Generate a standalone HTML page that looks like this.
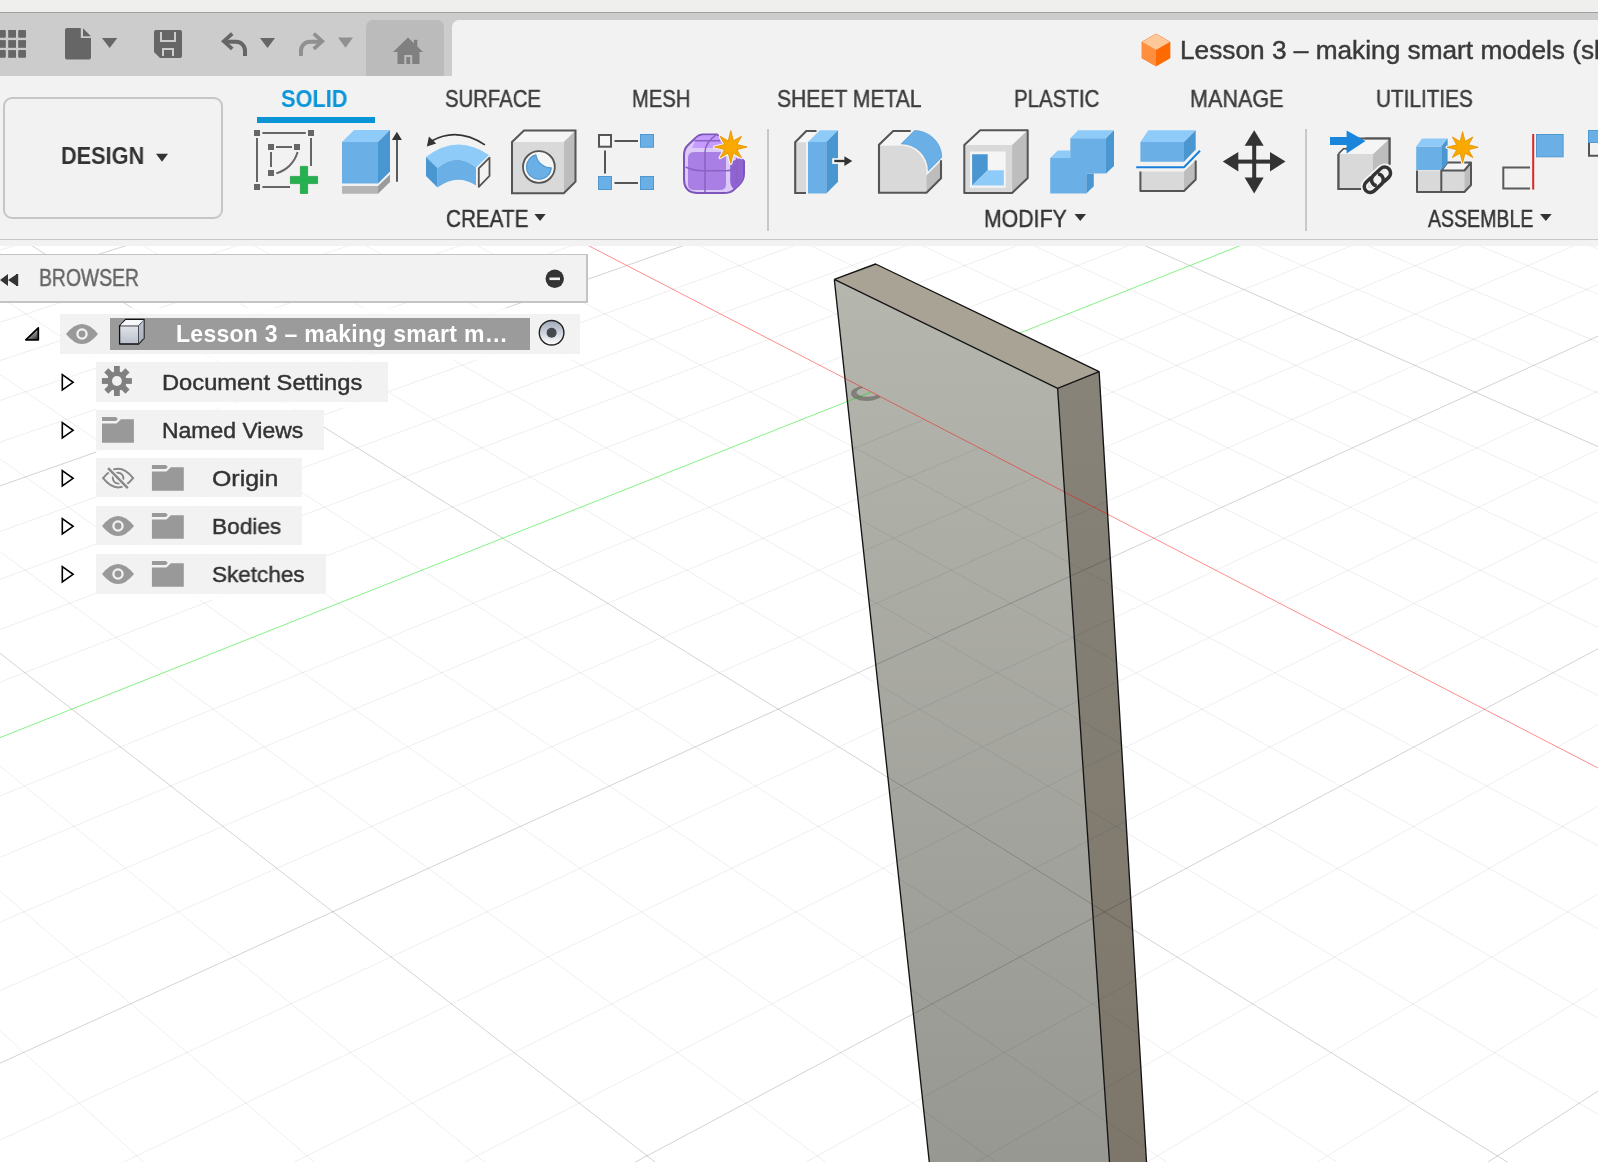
<!DOCTYPE html>
<html><head><meta charset="utf-8">
<style>
html,body{margin:0;padding:0;}
body{width:1598px;height:1162px;position:relative;overflow:hidden;background:#fff;font-family:"Liberation Sans",sans-serif;}
.a{position:absolute;}
.t{position:absolute;white-space:nowrap;line-height:1;will-change:transform;-webkit-text-stroke:0.45px currentColor;}
svg{position:absolute;left:0;top:0;overflow:visible;}
</style></head><body>
<!-- viewport -->
<svg class="a" width="1598" height="1162" viewBox="0 0 1598 1162" style="left:0;top:0">
<defs>
<linearGradient id="gf" x1="0" y1="280" x2="0" y2="1162" gradientUnits="userSpaceOnUse"><stop offset="0" stop-color="#b5b6ae"/><stop offset="1" stop-color="#989892"/></linearGradient>
<linearGradient id="gr" x1="0" y1="372" x2="0" y2="1162" gradientUnits="userSpaceOnUse"><stop offset="0" stop-color="#878378"/><stop offset="1" stop-color="#7d766b"/></linearGradient>
<clipPath id="cfull"><polygon points="834.3,279.4 1057.6,388.3 1109.5,1162 929.3,1162"/><polygon points="1057.6,388.3 1099.1,371.6 1146.5,1162 1109.5,1162"/></clipPath>
<clipPath id="cf"><polygon points="845,378.4 1064.6,492.1 1109.5,1162 929.3,1162"/><polygon points="1064.6,492.1 1105.2,474.4 1146.5,1162 1109.5,1162"/></clipPath>
</defs>
<g fill="none" stroke-width="1">
<path d="M-1470.9 506.8L953.4 -175.2M-1430.4 569.9L1029.7 -148.3M-1409.1 603.0L1069.1 -134.4M-1387.2 637.1L1109.2 -120.2M-1364.5 672.4L1150.3 -105.8M-1316.8 746.7L1235.0 -75.9M-1291.7 785.7L1278.7 -60.4M-1265.7 826.2L1323.5 -44.7M-1238.7 868.1L1369.2 -28.5M-1181.7 956.7L1463.8 4.8M-1151.6 1003.6L1512.8 22.1M-1120.3 1052.3L1562.9 39.8M-1087.8 1102.9L1614.2 57.9M-1018.6 1210.6L1720.6 95.4M-981.8 1267.8L1775.7 114.9M-943.4 1327.5L1832.2 134.8M-903.3 1389.9L1890.2 155.2M-817.5 1523.4L2010.6 197.7M-771.6 1594.9L2073.2 219.8M-723.4 1669.9L2137.5 242.5M-672.8 1748.6L2203.5 265.7M-563.6 1918.5L2340.9 314.2M-504.5 2010.3L2412.6 339.5M-442.2 2107.2L2486.3 365.5M-376.4 2209.7L2562.1 392.3M-232.7 2433.2L2720.5 448.1M-154.1 2555.4L2803.3 477.4M-70.5 2685.5L2888.7 507.5M18.7 2824.3L2976.7 538.5M216.2 3131.6L3161.3 603.6M325.9 3302.2L3258.1 637.8M-1364.0 476.7L513.8 3131.5M-1260.2 447.5L688.7 2972.6M-1159.5 419.2L851.9 2824.3M-1061.7 391.7L1004.6 2685.5M-874.4 339.0L1282.3 2433.2M-784.6 313.7L1408.9 2318.2M-697.3 289.2L1528.2 2209.7M-612.4 265.3L1641.0 2107.3M-449.2 219.4L1848.6 1918.6M-370.8 197.3L1944.5 1831.5M-294.4 175.8L2035.5 1748.7M-219.9 154.9L2122.1 1670.0M-76.5 114.5L2283.3 1523.6M-7.4 95.1L2358.3 1455.4M60.0 76.1L2430.1 1390.2M125.8 57.6L2498.7 1327.8M252.8 21.9L2627.4 1210.9M314.2 4.6L2687.8 1156.0M374.1 -12.2L2745.8 1103.4M432.7 -28.7L2801.5 1052.7M546.0 -60.6L2906.6 957.2M600.8 -76.0L2956.2 912.1M654.4 -91.1L3004.0 868.6M706.9 -105.9L3050.2 826.7M808.6 -134.5L3137.6 747.2M857.9 -148.3L3179.2 709.5M906.1 -161.9L3219.3 673.1M953.4 -175.2L3258.1 637.8" stroke="rgba(0,0,0,0.068)"/>
<path d="M-1451.0 537.9L991.2 -161.9M-1341.0 708.9L1192.2 -91.0M-1210.8 911.6L1416.0 -12.0M-861.4 1455.1L1949.6 176.2M-619.6 1831.3L2271.3 289.7M-306.6 2318.1L2640.1 419.8M114.1 2972.6L3067.5 570.6M-1470.9 506.8L325.9 3302.2M-966.7 365.0L1147.8 2555.4M-529.7 242.0L1747.6 2010.4M-147.3 134.5L2204.6 1595.1M490.0 -44.8L2855.0 1004.1M758.3 -120.3L3094.7 786.3" stroke="rgba(0,0,0,0.175)"/>
</g>
<path d="M190.1 39.5L2564.4 1268.1" stroke="rgba(255,0,0,0.45)" fill="none"/>
<path d="M-1053.9 1155.7L871.2 392.0M871.2 392.0L1666.7 76.4" stroke="rgba(0,225,0,0.48)" fill="none"/>
<polygon points="834.3,279.4 1057.6,388.3 1109.5,1162 929.3,1162" fill="url(#gf)"/>
<polygon points="834.3,279.4 875.6,264 1099.1,371.6 1057.6,388.3" fill="#a9a396"/>
<polygon points="1057.6,388.3 1099.1,371.6 1146.5,1162 1109.5,1162" fill="url(#gr)"/>
<path d="M190.1 39.5L2564.4 1268.1" stroke="rgba(255,0,0,0.45)" fill="none" clip-path="url(#cfull)"/>
<g clip-path="url(#cf)">
<g fill="none" stroke-width="1">
<path d="M-1470.9 506.8L953.4 -175.2M-1430.4 569.9L1029.7 -148.3M-1409.1 603.0L1069.1 -134.4M-1387.2 637.1L1109.2 -120.2M-1364.5 672.4L1150.3 -105.8M-1316.8 746.7L1235.0 -75.9M-1291.7 785.7L1278.7 -60.4M-1265.7 826.2L1323.5 -44.7M-1238.7 868.1L1369.2 -28.5M-1181.7 956.7L1463.8 4.8M-1151.6 1003.6L1512.8 22.1M-1120.3 1052.3L1562.9 39.8M-1087.8 1102.9L1614.2 57.9M-1018.6 1210.6L1720.6 95.4M-981.8 1267.8L1775.7 114.9M-943.4 1327.5L1832.2 134.8M-903.3 1389.9L1890.2 155.2M-817.5 1523.4L2010.6 197.7M-771.6 1594.9L2073.2 219.8M-723.4 1669.9L2137.5 242.5M-672.8 1748.6L2203.5 265.7M-563.6 1918.5L2340.9 314.2M-504.5 2010.3L2412.6 339.5M-442.2 2107.2L2486.3 365.5M-376.4 2209.7L2562.1 392.3M-232.7 2433.2L2720.5 448.1M-154.1 2555.4L2803.3 477.4M-70.5 2685.5L2888.7 507.5M18.7 2824.3L2976.7 538.5M216.2 3131.6L3161.3 603.6M325.9 3302.2L3258.1 637.8M-1364.0 476.7L513.8 3131.5M-1260.2 447.5L688.7 2972.6M-1159.5 419.2L851.9 2824.3M-1061.7 391.7L1004.6 2685.5M-874.4 339.0L1282.3 2433.2M-784.6 313.7L1408.9 2318.2M-697.3 289.2L1528.2 2209.7M-612.4 265.3L1641.0 2107.3M-449.2 219.4L1848.6 1918.6M-370.8 197.3L1944.5 1831.5M-294.4 175.8L2035.5 1748.7M-219.9 154.9L2122.1 1670.0M-76.5 114.5L2283.3 1523.6M-7.4 95.1L2358.3 1455.4M60.0 76.1L2430.1 1390.2M125.8 57.6L2498.7 1327.8M252.8 21.9L2627.4 1210.9M314.2 4.6L2687.8 1156.0M374.1 -12.2L2745.8 1103.4M432.7 -28.7L2801.5 1052.7M546.0 -60.6L2906.6 957.2M600.8 -76.0L2956.2 912.1M654.4 -91.1L3004.0 868.6M706.9 -105.9L3050.2 826.7M808.6 -134.5L3137.6 747.2M857.9 -148.3L3179.2 709.5M906.1 -161.9L3219.3 673.1M953.4 -175.2L3258.1 637.8" stroke="rgba(0,0,0,0.068)"/>
<path d="M-1451.0 537.9L991.2 -161.9M-1341.0 708.9L1192.2 -91.0M-1210.8 911.6L1416.0 -12.0M-861.4 1455.1L1949.6 176.2M-619.6 1831.3L2271.3 289.7M-306.6 2318.1L2640.1 419.8M114.1 2972.6L3067.5 570.6M-1470.9 506.8L325.9 3302.2M-966.7 365.0L1147.8 2555.4M-529.7 242.0L1747.6 2010.4M-147.3 134.5L2204.6 1595.1M490.0 -44.8L2855.0 1004.1M758.3 -120.3L3094.7 786.3" stroke="rgba(0,0,0,0.175)"/>
</g>
<path d="M-1053.9 1155.7L871.2 392.0" stroke="rgba(0,225,0,0.48)" fill="none"/>
</g>
<path d="M851 393.4A15.6 7.6 0 1 0 882.2 393.4A15.6 7.6 0 1 0 851 393.4Z M856.5 392.2A11.2 4.6 0 1 0 878.9 392.2A11.2 4.6 0 1 0 856.5 392.2Z" fill="rgba(60,60,56,0.42)" fill-rule="evenodd" clip-path="url(#cf)"/>
<path d="M834.3 279.4L875.6 264L1099.1 371.6L1146.5 1162M834.3 279.4L1057.6 388.3L1099.1 371.6M1057.6 388.3L1109.5 1162M834.3 279.4L929.3 1162" stroke="#141414" stroke-width="1.35" fill="none" stroke-linejoin="round"/>
</svg>
<!-- top chrome -->
<div class="a" style="left:0;top:0;width:1598px;height:12px;background:#efefee"></div>
<div class="a" style="left:0;top:12px;width:1598px;height:1px;background:#9f9f9f"></div>
<div class="a" style="left:0;top:13px;width:1598px;height:63px;background:#cccccc"></div>
<div class="a" style="left:366px;top:20px;width:78px;height:56px;background:#bbbbbb;border-radius:7px 7px 0 0"></div>
<div class="a" style="left:452px;top:20px;width:1146px;height:56px;background:#f2f2f2;border-radius:7px 0 0 0"></div>
<!-- toolbar -->
<div class="a" style="left:0;top:76px;width:1598px;height:163px;background:#f2f2f2"></div>
<div class="a" style="left:0;top:239px;width:1598px;height:1px;background:#c8c8c8"></div>
<div class="a" style="left:0;top:240px;width:1598px;height:6px;background:#f2f2f2"></div>


<!-- quick access icons -->
<svg class="a" width="460" height="76" viewBox="0 0 460 76" style="left:0;top:0">
 <g fill="#666">
  <rect x="-2" y="30" width="7.8" height="7.7" rx="1"/><rect x="8.2" y="30" width="7.8" height="7.7"/><rect x="18.2" y="30" width="7.8" height="7.7" rx="1"/>
  <rect x="-2" y="40.1" width="7.8" height="7.7"/><rect x="8.2" y="40.1" width="7.8" height="7.7"/><rect x="18.2" y="40.1" width="7.8" height="7.7"/>
  <rect x="-2" y="50.1" width="7.8" height="7.7" rx="1"/><rect x="8.2" y="50.1" width="7.8" height="7.7"/><rect x="18.2" y="50.1" width="7.8" height="7.7" rx="1"/>
  <path d="M67 28H80.8V38.1H91V57.6A2 2 0 0 1 89 59.6H67A2 2 0 0 1 65 57.6V30A2 2 0 0 1 67 28Z"/>
  <path d="M83 28.3L90.9 36.2H83Z"/>
  <path d="M102 38H117.3L109.65 48Z"/>
  <path d="M156 30H180A2 2 0 0 1 182 32V56A2 2 0 0 1 180 58H160L154 52V32A2 2 0 0 1 156 30Z"/>
  <path d="M221 41.3L231 32.3L233.5 35L226.5 41.3L233.5 47.6L231 50.3Z"/>
  <path d="M225 39.8H236A11 11 0 0 1 247 50.8V56H243V50.8A7 7 0 0 0 236 43.8H225Z"/>
  <path d="M260 38H275L267.5 48Z"/>
 </g>
 <g fill="#cccccc">
  <path d="M160 32H162V40H174V32H176V42H160Z"/>
  <path d="M162 56V48H174V56H172V50H164V56Z"/>
 </g>
 <g fill="#909090">
  <path d="M325 41.3L315 32.3L312.5 35L319.5 41.3L312.5 47.6L315 50.3Z"/>
  <path d="M321 39.8H310A11 11 0 0 0 299 50.8V56H303V50.8A7 7 0 0 1 310 43.8H321Z"/>
  <path d="M338 37.6H353L345.5 47.7Z"/>
 </g>
 <g fill="#808080">
  <path d="M408 37.5L423 52H419.5V64H397.5V52H393Z"/>
  <rect x="413.9" y="39.8" width="3.4" height="8"/>
  <rect x="404.3" y="55" width="7.9" height="9" fill="#bbbbbb"/>
  <rect x="406.3" y="57" width="3.9" height="7"/>
 </g>
</svg>
<!-- title -->
<svg class="a" width="40" height="40" viewBox="0 0 40 40" style="left:1136px;top:30px">
 <path d="M20 4L34 12V28L20 36L6 28V12Z" fill="#ff8a3a" stroke="#e8782e" stroke-width="0.8"/>
 <path d="M20 4L34 12L20 20L6 12Z" fill="#ffc898"/>
 <path d="M20 20L34 12V28L20 36Z" fill="#ff6a00"/>
 <path d="M20 20L6 12V28L20 36Z" fill="#ff8f3f"/>
</svg>
<div class="t" id="title" style="left:1179.97px;top:38.4px;font-size:25.8px;color:#3a3a3a;transform:scaleX(1.017);transform-origin:0 0">Lesson 3 – making smart models (slot)</div>

<!-- tabs -->
<div class="t" id="tSOLID" style="left:280.50px;top:87.7px;font-size:23.6px;color:#0a96d8;font-weight:bold;-webkit-text-stroke:0;transform:scaleX(0.9229);transform-origin:0 0">SOLID</div>
<div class="a" style="left:257px;top:117px;width:118px;height:6px;background:#0a94d6"></div>
<div class="t" id="tSURFACE" style="left:445.44px;top:87.7px;font-size:23.6px;color:#3c3c3c;transform:scaleX(0.8605);transform-origin:0 0">SURFACE</div>
<div class="t" id="tMESH" style="left:632.15px;top:87.7px;font-size:23.6px;color:#3c3c3c;transform:scaleX(0.8544);transform-origin:0 0">MESH</div>
<div class="t" id="tSHEET" style="left:777.11px;top:87.7px;font-size:23.6px;color:#3c3c3c;transform:scaleX(0.8944);transform-origin:0 0">SHEET METAL</div>
<div class="t" id="tPLASTIC" style="left:1013.63px;top:87.7px;font-size:23.6px;color:#3c3c3c;transform:scaleX(0.8685);transform-origin:0 0">PLASTIC</div>
<div class="t" id="tMANAGE" style="left:1189.79px;top:87.7px;font-size:23.6px;color:#3c3c3c;transform:scaleX(0.9143);transform-origin:0 0">MANAGE</div>
<div class="t" id="tUTIL" style="left:1375.92px;top:87.7px;font-size:23.6px;color:#3c3c3c;transform:scaleX(0.8783);transform-origin:0 0">UTILITIES</div>

<!-- design button -->
<div class="a" style="left:3.2px;top:97px;width:215.5px;height:117.7px;border:2px solid #c6c6c6;border-radius:9px"></div>
<div class="t" id="tDESIGN" style="left:61.40px;top:143.7px;font-size:24px;color:#333;font-weight:bold;-webkit-text-stroke:0;transform:scaleX(0.9043);transform-origin:0 0">DESIGN</div>
<svg class="a" width="20" height="20" style="left:150px;top:150px" viewBox="0 0 20 20"><path d="M6 3.8H18L12 11.8Z" fill="#333"/></svg>

<!-- panel labels -->
<div class="t" id="tCREATE" style="left:446.13px;top:206.8px;font-size:23.8px;color:#333;transform:scaleX(0.8688);transform-origin:0 0">CREATE</div>
<svg class="a" width="20" height="20" style="left:530px;top:210px" viewBox="0 0 20 20"><path d="M4.4 4H15.7L10.05 11Z" fill="#333"/></svg>
<div class="t" id="tMODIFY" style="left:983.61px;top:207px;font-size:23.8px;color:#333;transform:scaleX(0.8935);transform-origin:0 0">MODIFY</div>
<svg class="a" width="20" height="20" style="left:1070px;top:210px" viewBox="0 0 20 20"><path d="M4.5 4H16L10.25 11Z" fill="#333"/></svg>
<div class="t" id="tASSEMBLE" style="left:1427.80px;top:207px;font-size:23.8px;color:#333;transform:scaleX(0.8209);transform-origin:0 0">ASSEMBLE</div>
<svg class="a" width="20" height="20" style="left:1536px;top:210px" viewBox="0 0 20 20"><path d="M4 4H15.7L9.85 11Z" fill="#333"/></svg>
<div class="a" style="left:767px;top:129px;width:2px;height:102px;background:#c8c8c8"></div>
<div class="a" style="left:1305px;top:129px;width:2px;height:102px;background:#c8c8c8"></div>


<svg class="a" width="1598" height="240" viewBox="0 0 1598 240" style="left:0;top:0">
<defs>
 <g id="star8"><path d="M0.00 -16.30L2.53 -6.10L10.68 -10.68L6.10 -2.53L16.30 0.00L6.10 2.53L10.68 10.68L2.53 6.10L0.00 16.30L-2.53 6.10L-10.68 10.68L-6.10 2.53L-16.30 0.00L-6.10 -2.53L-10.68 -10.68L-2.53 -6.10Z"/></g>
</defs>
<!-- 1 sketch -->
<g fill="#666">
 <rect x="254" y="130" width="6" height="6"/><rect x="308" y="130" width="6" height="6"/><rect x="254" y="184" width="6" height="6"/>
 <rect x="268" y="144" width="6" height="6"/><rect x="294" y="144" width="6" height="6"/><rect x="268" y="170" width="6" height="6"/>
</g>
<g stroke="#666" stroke-width="2" fill="none">
 <path d="M262.4 133H305.8M257 138V182M311 138V166M262.4 187H290M276 147H292M271 152V167M276.3 173.4A31 31 0 0 0 297.6 152.1"/>
</g>
<path d="M300 166H308V176H318V184H308V193.8H300V184H290V176H300Z" fill="#f2f2f2" stroke="#f2f2f2" stroke-width="2"/><path d="M300.4 166.4H307.6V176.4H317.6V183.6H307.6V193.4H300.4V183.6H290.4V176.4H300.4Z" fill="#27b04f" stroke="#21a045" stroke-width="0.8"/>
<!-- 2 extrude -->
<path d="M342 186H378V193.8H342Z" fill="#b5b5b5"/><path d="M378 186L390 174.5V182L378 193.8Z" fill="#9b9b9b"/>
<path d="M342 142H378V183.6H342Z" fill="#6aafe6"/>
<path d="M342 142L354 130H390L378 142Z" fill="#8ecbf8"/>
<path d="M378 142L390 130V171.5L378 183.6Z" fill="#4a96d0"/>
<path d="M396.2 138H397.8V181.7H396.2Z" fill="#333"/><path d="M391.9 140L396.9 131.8L401.9 140Z" fill="#333"/>
<!-- 3 revolve -->
<path d="M484.9 144.8Q457.3 126.5 431.5 141" stroke="#333" stroke-width="1.6" fill="none"/>
<path d="M426.9 146.5L428.9 136.6L436.2 143.6Z" fill="#333"/>
<path d="M426 157Q457 133 489 155L476 167.5Q457 152 437.5 168Z" fill="#8ecbf8"/>
<path d="M437.5 168Q457 152 476 167.5V185.6Q457 173 437.5 187.6Z" fill="#6aafe6"/>
<path d="M426 157L437.5 168V187.6L426 176Z" fill="#4a96d0"/>
<path d="M478.8 168.3L489.5 157.7V175.8L478.8 186.8Z" fill="#f2f2f2" stroke="#555" stroke-width="1.8" stroke-linejoin="round"/>
<!-- 4 hole -->
<path d="M512 142L524 130.5H575.5L563.8 142Z" fill="#f5f5f5"/>
<path d="M512 142H563.8V193.3H512Z" fill="#d9d9d9"/>
<path d="M563.8 142L575.5 130.5V181.6L563.8 193.3Z" fill="#bdbdbd"/>
<path d="M512 142L524 130.5H575.5V181.6L563.8 193.3H512Z" fill="none" stroke="#555" stroke-width="2" stroke-linejoin="miter"/>
<circle cx="538.9" cy="167" r="15.9" fill="#f5f5f5" stroke="#555" stroke-width="1.8"/>
<path d="M535.9 154.9A12.4 12.4 0 1 0 551.3 167.9A15.4 15.4 0 0 1 535.9 154.9Z" fill="#6aafe6" stroke="#4f98d0" stroke-width="1.1" stroke-linejoin="round"/>
<!-- 5 pattern -->
<rect x="599" y="135" width="12" height="11.7" fill="#f8f8f8" stroke="#555" stroke-width="2"/>
<rect x="640.5" y="134.5" width="13" height="12.7" fill="#6aafe6" stroke="#4f98d0" stroke-width="1"/>
<rect x="598.5" y="176.5" width="13" height="13" fill="#6aafe6" stroke="#4f98d0" stroke-width="1"/>
<rect x="640.5" y="176.5" width="13" height="13" fill="#6aafe6" stroke="#4f98d0" stroke-width="1"/>
<path d="M614.5 141H638M605 150.5V173.5M614.5 183H638" stroke="#555" stroke-width="2"/>
<!-- 6 form -->
<path d="M703 134.4H717L744 161.2V174Q744 180 739 185L733 190.5Q730 193 724 193H698Q684 193 684 179V155Q684 149 688 145L696 137.5Q699 134.4 703 134.4Z" fill="#ddc9f7" stroke="#7d54bb" stroke-width="2"/>
<path d="M697 137.5Q699.5 135.4 703 135.4H717L731 149.5Q729 148 724 148H692Z" fill="#c59bff"/>
<path d="M688 158Q688 152 694 152H720Q726 152 726 158V184Q726 190 720 190H694Q688 190 688 184Z" fill="#a97fe6"/>
<path d="M730.2 162L743 157V176Q743 181 739 185L734 189Q730.2 186 730.2 181Z" fill="#9063d4"/>
<path d="M694.4 140.8H720.2M716.3 134.7Q705 143 705 152V192M685.6 167Q694 171 704 170.8H726.6Q733 170.5 736.3 165Q740 162 743.4 160.8M736.6 158V184" stroke="#8a62c2" stroke-width="1.5" fill="none"/>
<g transform="translate(730.8 147)"><use href="#star8" fill="#f2f2f2" stroke="#f2f2f2" stroke-width="3.2" stroke-linejoin="round"/><use href="#star8" fill="#f9a900" stroke="#e49300" stroke-width="0.9"/></g>
<!-- 7 press pull -->
<path d="M795.5 142.3L806.3 131.5H816.5L806 142.3Z" fill="#f5f5f5"/>
<rect x="795.5" y="142.3" width="10.5" height="50.6" fill="#d9d9d9"/>
<path d="M806 193H795.2V142.3L806.3 131H816.5" fill="none" stroke="#555" stroke-width="2.1"/>
<path d="M808 142.1H826.3V193.6H808Z" fill="#6aafe6"/>
<path d="M808 142.1L820 130.2H838L826.3 142.1Z" fill="#8ecbf8"/>
<path d="M826.3 142.1L838 130.2V181.8L826.3 193.6Z" fill="#4a96d0"/>
<rect x="832.2" y="158.2" width="6" height="5.8" fill="#f5f5f5"/>
<path d="M834.3 161H846" stroke="#333" stroke-width="2.3"/>
<path d="M844.4 156.2L852.3 161L844.4 165.9Z" fill="#333"/>
<!-- 8 fillet -->
<path d="M880 145L893.5 131.8H912L899 145Z" fill="#f5f5f5"/>
<path d="M880 145.8H901.6A25 25.5 0 0 1 926.4 171.5V192H880Z" fill="#d9d9d9"/>
<path d="M926.4 175.4L940.2 161.8V178L926.4 191.8Z" fill="#bdbdbd"/>
<path d="M901.3 143.8L914.5 130.6A27.2 26.8 0 0 1 941.7 157.3L928.4 170.8A27 27 0 0 0 901.3 143.8Z" fill="#6aafe6" stroke="#5aa0d8" stroke-width="0.8"/>
<path d="M910.7 131H893.2L879 144.7V192.8H926.5L941 178.3V160.2" fill="none" stroke="#555" stroke-width="2.1" stroke-linejoin="miter"/>
<!-- 9 shell -->
<path d="M964.3 145.1L980.2 130.2H1027.7L1012.1 145.1Z" fill="#f5f5f5"/>
<path d="M964.3 145.1H1012.1V193H964.3Z" fill="#d9d9d9"/>
<path d="M1012.1 145.1L1027.7 130.2V178L1012.1 193Z" fill="#bdbdbd"/>
<path d="M964.3 145.1L980.2 130.2H1027.7V178L1012.1 193H964.3Z" fill="none" stroke="#555" stroke-width="2" stroke-linejoin="round"/>
<rect x="970" y="151.5" width="35.7" height="36.2" fill="#f5f5f5"/>
<path d="M972.1 154.3H987.7V170.2L972.1 185.5Z" fill="#4a96d0"/>
<path d="M972.1 185.5L987.7 170.2H1003.8V185.5Z" fill="#8ecbf8"/>
<!-- 10 combine -->
<path d="M1050.2 158L1057.8 150.5H1070.3V158Z" fill="#8ecbf8"/>
<path d="M1050.2 158H1086.3V193.6H1050.2Z" fill="#6aafe6"/>
<path d="M1086.3 173.4H1093.8V186.2L1086.3 193.6Z" fill="#4a96d0"/>
<path d="M1070.3 138.3L1078.2 130.3H1114L1106 138.3Z" fill="#8ecbf8"/>
<path d="M1070.3 138.3H1106V173.4H1070.3Z" fill="#6aafe6"/>
<path d="M1106 138.3L1114 130.3V166L1106 173.4Z" fill="#4a96d0"/>
<!-- 11 split -->
<path d="M1140.4 171.5H1184V191H1140.4Z" fill="#d9d9d9"/>
<path d="M1184 171.5L1195.7 160.5V179.5L1184 191Z" fill="#bdbdbd"/>
<path d="M1140.4 171.5V191H1184L1195.7 179.5V160.5" fill="none" stroke="#555" stroke-width="2" stroke-linejoin="round"/>
<path d="M1136.2 167.2H1184L1200 150.8" stroke="#f5f5f5" stroke-width="4" fill="none"/>
<path d="M1136.2 167.2H1184L1200 150.8" stroke="#1a80dc" stroke-width="2" fill="none"/>
<path d="M1140.4 142L1148.3 130.2H1195.7L1184 142Z" fill="#8ecbf8"/>
<path d="M1140.4 142H1184V161.7H1140.4Z" fill="#6aafe6"/>
<path d="M1184 142L1195.7 130.2V149.5L1184 161.7Z" fill="#4a96d0"/>
<!-- 12 move -->
<g fill="#333">
 <rect x="1252.2" y="140" width="4" height="43"/><rect x="1233" y="159.6" width="42" height="4"/>
 <path d="M1254.2 130.2L1263.7 145.8H1244.6Z"/><path d="M1254.2 193.5L1263.7 177.5H1244.6Z"/>
 <path d="M1222.8 161.6L1238.3 152V171.5Z"/><path d="M1285.5 161.6L1270 152V171.5Z"/>
</g>
<!-- 13 joint -->
<path d="M1338.5 154L1343.5 149H1348M1365 138.5H1389.5V164.5L1376 176M1360 189H1338.5V154" fill="none" stroke="#555" stroke-width="2"/>
<path d="M1339.5 154H1373V188H1339.5Z" fill="#d9d9d9"/>
<path d="M1339.5 154L1344 149.5H1380L1373 154Z" fill="#f5f5f5"/>
<path d="M1373 154L1388.5 139.5V163L1373 178Z" fill="#bdbdbd"/>
<path d="M1346 149.5L1357 139.5H1388.5L1373 154Z" fill="#f5f5f5"/>
<path d="M1338.5 154V189H1362M1346 149.5L1357 138.5H1389.5V164" fill="none" stroke="#555" stroke-width="2"/>
<path d="M1330 137H1346.6V130.4L1365.5 140.9L1346.6 153.4V145H1330Z" fill="#1a85dd"/>
<g transform="translate(1377.4 179.8) rotate(-43) scale(1.1)" fill="none" stroke-width="3.2">
 <path d="M-2.5 -5.4H-9A5.4 5.4 0 0 0 -9 5.4H0A5.4 5.4 0 0 0 4.1 -3.5M2.5 5.4H9A5.4 5.4 0 0 0 9 -5.4H0A5.4 5.4 0 0 0 -4.1 3.5" stroke="#f2f2f2" stroke-width="6.5"/>
 <path d="M-2.5 -5.4H-9A5.4 5.4 0 0 0 -9 5.4H0A5.4 5.4 0 0 0 4.1 -3.5" stroke="#333"/>
 <path d="M2.5 5.4H9A5.4 5.4 0 0 0 9 -5.4H0A5.4 5.4 0 0 0 -4.1 3.5" stroke="#f2f2f2" stroke-width="5.5" stroke-dasharray="0 9 6 100"/>
 <path d="M2.5 5.4H9A5.4 5.4 0 0 0 9 -5.4H0A5.4 5.4 0 0 0 -4.1 3.5" stroke="#333"/>
</g>
<!-- 14 new component -->
<path d="M1417 170.5H1441.3V192H1417Z" fill="#d9d9d9"/>
<path d="M1441.3 170.5H1464.4V192H1441.3Z" fill="#d9d9d9"/>
<path d="M1441.3 170.5L1447.6 162.5H1471L1464.4 170.5Z" fill="#f5f5f5"/>
<path d="M1464.4 170.5L1471 162.5V185L1464.4 192Z" fill="#bdbdbd"/>
<path d="M1417 170.5V192H1464.4L1471 185V162.5H1447.6L1441.3 170.5H1464.4L1471 162.5M1441.3 170.5V192" fill="none" stroke="#555" stroke-width="2" stroke-linejoin="round"/>
<path d="M1416.2 146.6L1422 138.4H1447.6L1441.3 146.6Z" fill="#8ecbf8"/>
<path d="M1416.2 146.6H1441.3V170H1416.2Z" fill="#6aafe6"/>
<path d="M1441.3 146.6L1447.6 138.4V163.7L1441.3 170Z" fill="#4a96d0"/>
<g transform="translate(1462.6 147.3) scale(0.96)"><use href="#star8" fill="#f2f2f2" stroke="#f2f2f2" stroke-width="3.2" stroke-linejoin="round"/><use href="#star8" fill="#f9a900" stroke="#e49300" stroke-width="0.9"/></g>
<!-- 15 -->
<path d="M1530 167.5H1503.3V188.5H1530" fill="none" stroke="#5a5a5a" stroke-width="2"/>
<rect x="1532.2" y="134" width="2" height="55.6" fill="#d42a2a"/>
<rect x="1536.5" y="134.5" width="26.6" height="22.3" fill="#6aafe6" stroke="#4f98d0" stroke-width="1"/>
<!-- 16 partial -->
<rect x="1588.5" y="130.5" width="12" height="12" fill="#6aafe6" stroke="#4f98d0" stroke-width="1"/>
<path d="M1589 143V155.7H1600" fill="none" stroke="#555" stroke-width="2"/>
</svg>


<!-- browser -->
<div class="a" style="left:-2px;top:254px;width:587px;height:45.5px;background:#f2f2f2;border:1.5px solid #c4c4c4;border-right-width:2px;border-bottom-width:2px"></div>
<svg class="a" width="24" height="20" style="left:0;top:270px" viewBox="0 0 24 20"><path d="M0 10L8 4V16Z M8 10L17 4V16Z" fill="#333"/><rect x="16" y="4" width="2.2" height="12" fill="#333"/></svg>
<div class="t" id="tBROWSER" style="left:38.58px;top:266.8px;font-size:23.7px;color:#666;transform:scaleX(0.8164);transform-origin:0 0">BROWSER</div>
<svg class="a" width="24" height="24" style="left:543px;top:267px" viewBox="0 0 24 24"><circle cx="11.75" cy="11.75" r="9.2" fill="#333"/><rect x="6.5" y="10.5" width="10.5" height="2.6" fill="#f2f2f2"/></svg>


<!-- row backgrounds -->
<div class="a" style="left:60px;top:314px;width:519.6px;height:39.5px;background:#f2f2f2;box-shadow:0 6.2px 0 rgba(255,255,255,.8),0 -6.2px 0 rgba(255,255,255,.8)"></div>
<div class="a" style="left:110px;top:318px;width:419.75px;height:31.6px;background:#9b9b9b"></div>
<div class="a" style="left:96.3px;top:362.2px;width:291.7px;height:39.4px;background:#f2f2f2;box-shadow:0 6.2px 0 rgba(255,255,255,.8),0 -6.2px 0 rgba(255,255,255,.8)"></div>
<div class="a" style="left:96.3px;top:410px;width:227.5px;height:39.6px;background:#f2f2f2;box-shadow:0 6.2px 0 rgba(255,255,255,.8),0 -6.2px 0 rgba(255,255,255,.8)"></div>
<div class="a" style="left:96.3px;top:458.4px;width:205.6px;height:39.1px;background:#f2f2f2;box-shadow:0 6.2px 0 rgba(255,255,255,.8),0 -6.2px 0 rgba(255,255,255,.8)"></div>
<div class="a" style="left:96.3px;top:506.3px;width:205.6px;height:39.1px;background:#f2f2f2;box-shadow:0 6.2px 0 rgba(255,255,255,.8),0 -6.2px 0 rgba(255,255,255,.8)"></div>
<div class="a" style="left:96.3px;top:554.2px;width:229.4px;height:39.4px;background:#f2f2f2;box-shadow:0 6.2px 0 rgba(255,255,255,.8),0 -6.2px 0 rgba(255,255,255,.8)"></div>
<svg class="a" width="600" height="620" viewBox="0 0 600 620" style="left:0;top:0">
<defs>
 <linearGradient id="trig" x1="0.3" y1="0" x2="1" y2="1"><stop offset="0" stop-color="#f4f4f4"/><stop offset="1" stop-color="#222"/></linearGradient>
 <linearGradient id="cubeg" x1="0" y1="0" x2="0" y2="1"><stop offset="0" stop-color="#eef0f4"/><stop offset="1" stop-color="#b9c0cc"/></linearGradient>
 <linearGradient id="radg" x1="0" y1="0" x2="0" y2="1"><stop offset="0" stop-color="#9ea8ba"/><stop offset="1" stop-color="#ffffff"/></linearGradient>
 <g id="eye"><path d="M-16 0Q-8 -10 0 -10Q8 -10 16 0Q8 10 0 10Q-8 10 -16 0Z" fill="#999"/><circle r="4.6" fill="none" stroke="#f2f2f2" stroke-width="2.3"/></g>
 <g id="folder"><path d="M0 4.4H14.5L19 0H31.9V23.55H0Z M0 -2.2H13.9L16 -0.15L13.9 1.9H0Z" fill="#999"/></g>
 <g id="tri"><path d="M0.8 0.8L11.6 8.5L0.8 16.2Z" fill="#fff" stroke="#000" stroke-width="1.6" stroke-linejoin="miter"/></g>
</defs>
<path d="M25.8 339.8L38.3 327.8V339.8Z" fill="url(#trig)" stroke="#000" stroke-width="1.7" stroke-linejoin="round"/>
<use href="#eye" x="82" y="334"/>
<path d="M119.6 325.9L125.6 319.5H144V338.3L138.5 344H119.6Z" fill="url(#cubeg)" stroke="#111" stroke-width="1.3" stroke-linejoin="round"/>
<path d="M119.6 325.9H138.5V344M138.5 325.9L144 319.5" fill="none" stroke="#111" stroke-width="0.9"/>
<path d="M138.5 325.9L144 319.5V338.3L138.5 344Z" fill="#9fa8b8" opacity="0.6"/>
<path d="M120.3 325.3L125.9 320.1H143.3L138.2 325.3Z" fill="#f7f8fa"/>
<circle cx="551.6" cy="332.75" r="12.3" fill="url(#radg)" stroke="#222" stroke-width="1.4"/>
<circle cx="551.6" cy="332.75" r="5" fill="#454950"/>
<use href="#tri" x="61.5" y="373.8"/>
<use href="#tri" x="61.5" y="421.8"/>
<use href="#tri" x="61.5" y="469.8"/>
<use href="#tri" x="61.5" y="517.8"/>
<use href="#tri" x="61.5" y="565.8"/>
<g transform="translate(116.9 381)" fill="#808080">
 <rect x="-2.9" y="-15" width="5.8" height="30"/><rect x="-2.9" y="-15" width="5.8" height="30" transform="rotate(45)"/>
 <rect x="-2.9" y="-15" width="5.8" height="30" transform="rotate(90)"/><rect x="-2.9" y="-15" width="5.8" height="30" transform="rotate(135)"/>
 <circle r="9.8"/>
 <circle r="4.9" fill="#f2f2f2"/>
</g>
<use href="#folder" x="102" y="419.2"/>
<g transform="translate(118.1 478.1)" fill="none" stroke="#888" stroke-width="2">
 <path d="M-15 0Q-7.5 -9.3 0 -9.3Q7.5 -9.3 15 0Q7.5 9.3 0 9.3Q-7.5 9.3 -15 0Z"/>
 <circle r="5.3"/>
</g>
<path d="M108.1 468.1L127.8 488.1" stroke="#f2f2f2" stroke-width="5.5"/>
<path d="M108.1 468.1L127.8 488.1" stroke="#888" stroke-width="2.4"/>
<use href="#folder" x="151.9" y="467.2"/>
<use href="#eye" x="118" y="526"/>
<use href="#folder" x="151.9" y="515.2"/>
<use href="#eye" x="118" y="574"/>
<use href="#folder" x="151.9" y="563.2"/>
</svg>
<div class="t" id="tLesson" style="left:176px;top:323.2px;font-size:23px;letter-spacing:0.28px;color:#fff;font-weight:bold;-webkit-text-stroke:0">Lesson 3 – making smart m…</div>
<div class="t" id="tDoc" style="left:162.38px;top:371.42px;font-size:22.8px;color:#333;transform:scaleX(1.0398);transform-origin:0 0">Document Settings</div>
<div class="t" id="tNamed" style="left:162.41px;top:419.42px;font-size:22.8px;color:#333;transform:scaleX(1.0071);transform-origin:0 0">Named Views</div>
<div class="t" id="tOrigin" style="left:211.63px;top:467.42px;font-size:22.8px;color:#333;transform:scaleX(1.0917);transform-origin:0 0">Origin</div>
<div class="t" id="tBodies" style="left:211.73px;top:515.42px;font-size:22.8px;color:#333;transform:scaleX(0.9928);transform-origin:0 0">Bodies</div>
<div class="t" id="tSketches" style="left:211.73px;top:563.42px;font-size:22.8px;color:#333;transform:scaleX(0.9880);transform-origin:0 0">Sketches</div>



</body></html>
